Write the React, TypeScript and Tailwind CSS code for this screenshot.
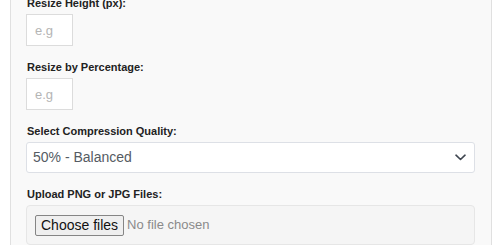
import { useState } from "react";

const QUALITY_OPTIONS = [
  { value: "90", label: "90% - High Quality" },
  { value: "70", label: "70% - Good" },
  { value: "50", label: "50% - Balanced" },
  { value: "30", label: "30% - Small File" },
];

export default function App() {
  const [quality, setQuality] = useState("50");
  const [files, setFiles] = useState<FileList | null>(null);

  return (
    <div className="min-h-screen bg-white font-['Liberation_Sans',Arial,sans-serif] overflow-hidden">
      <div className="ml-[10px] w-[482px] h-[250px] border-x border-[#e0e0e0] bg-[#f9f9f9] pl-[15px] pr-[16px]">
        <div className="-mt-[5px]">
          {/* Resize height */}
          <div className="mb-[13px]">
            <label className="block text-[11px] leading-[16px] font-bold text-[#222] mb-[3px] pl-px">Resize Height (px):</label>
            <input
              type="text"
              inputMode="numeric"
              placeholder="e.g"
              className="w-[47px] h-[32px] bg-white border border-[#dcdcdc] px-[8px] text-[13px] text-[#333] placeholder:text-[#b5b5b5] outline-none"
            />
          </div>

          {/* Resize percentage */}
          <div className="mb-[13px]">
            <label className="block text-[11px] leading-[16px] font-bold text-[#222] mb-[3px] pl-px">Resize by Percentage:</label>
            <input
              type="text"
              inputMode="numeric"
              placeholder="e.g"
              className="w-[47px] h-[32px] bg-white border border-[#dcdcdc] px-[8px] text-[13px] text-[#333] placeholder:text-[#b5b5b5] outline-none"
            />
          </div>

          {/* Quality */}
          <div className="mb-[13px]">
            <label className="block text-[11px] leading-[16px] font-bold text-[#222] mb-[3px] pl-px">Select Compression Quality:</label>
            <div className="relative">
              <select
                value={quality}
                onChange={(e) => setQuality(e.target.value)}
                className="appearance-none w-full h-[31px] bg-white border border-[#dde0e6] rounded-[3px] pl-[6px] text-[14px] text-[#555b63] outline-none"
              >
                {QUALITY_OPTIONS.map((o) => (
                  <option key={o.value} value={o.value}>{o.label}</option>
                ))}
              </select>
              <svg
                className="absolute right-[9px] top-[12px] pointer-events-none"
                width="11"
                height="7"
                viewBox="0 0 11 7"
                fill="none"
              >
                <path d="M1 1.2 L5.5 5.5 L10 1.2" stroke="#3f4650" strokeWidth="1.6" strokeLinecap="round" strokeLinejoin="round" />
              </svg>
            </div>
          </div>

          {/* Upload */}
          <div>
            <label className="block text-[11px] leading-[16px] font-bold text-[#222] mb-[3px] pl-px">Upload PNG or JPG Files:</label>
            <label className="flex items-center h-[40px] bg-[#f5f5f5] border border-[#e6e6e6] rounded-[4px] px-[8px] cursor-pointer">
              <input
                type="file"
                multiple
                accept="image/png,image/jpeg"
                className="hidden"
                onChange={(e) => setFiles(e.target.files)}
              />
              <span className="h-[21px] px-[5px] flex items-center bg-[#efefef] border border-[#858585] rounded-[2px] text-[14px] leading-none text-[#111]">
                Choose files
              </span>
              <span className="ml-[3px] text-[13px] text-[#8a8a8a]">
                {files && files.length > 0 ? `${files.length} files` : "No file chosen"}
              </span>
            </label>
          </div>
        </div>
      </div>
    </div>
  );
}
